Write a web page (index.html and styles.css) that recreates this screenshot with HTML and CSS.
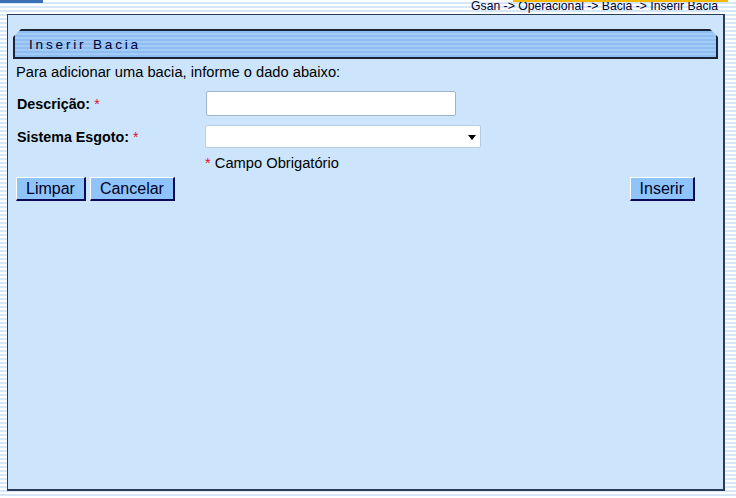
FILE: index.html
```html
<!DOCTYPE html>
<html lang="pt">
<head>
    <meta charset="UTF-8">
    <title>Inserir Bacia</title>
    <link rel="stylesheet" href="styles.css">
</head>
<body>
    <div class="topo">
        <div class="marca"></div>
        <div class="caminho">Gsan -&gt; Operacional -&gt; Bacia -&gt; Inserir Bacia</div>
    </div>

    <div class="painel">
        <div class="titulo">Inserir Bacia</div>
        <p class="instrucao">Para adicionar uma bacia, informe o dado abaixo:</p>

        <div class="form">
            <label class="rotulo">Descrição:<span class="obrig">*</span></label>
            <input type="text" class="campo">

            <label class="rotulo">Sistema Esgoto:<span class="obrig">*</span></label>
            <div class="select">
                <span class="seta"></span>
            </div>

            <span></span>
            <div class="aviso"><span class="obrig">*</span> Campo Obrigatório</div>
        </div>

        <div class="botoes">
            <button class="botao">Limpar</button>
            <button class="botao">Cancelar</button>
            <button class="botao inserir">Inserir</button>
        </div>
    </div>
</body>
</html>
```

FILE: styles.css
```css
*{
    margin: 0;
    padding: 0;
    box-sizing: border-box;
}
body{
    width: 736px;
    height: 498px;
    overflow: hidden;
    font-family: "Liberation Sans", Arial, sans-serif;
    font-size: 14.7px;
    color: #000;
    background: repeating-linear-gradient(to bottom, #ffffff 0px, #ffffff 2px, #d6e8f8 2px, #d6e8f8 4px);
}
.topo{
    display: flex;
    justify-content: space-between;
    height: 14px;
}
.marca{
    width: 43px;
    height: 3px;
    background-color: #3b6fb6;
}
.caminho{
    position: relative;
    padding-right: 18px;
    padding-top: 1px;
    font-size: 12.2px;
    line-height: 11px;
    height: 12px;
    color: #000033;
}
.caminho::before{
    content: "";
    position: absolute;
    left: 42px;
    right: 8px;
    top: 0;
    height: 2px;
    background-color: #f8b800;
}
.painel{
    margin-left: 7px;
    width: 718px;
    height: 477px;
    border: 1px solid #2c3e57;
    border-width: 1px 2px 2px 1px;
    background-color: #cce5fd;
    padding: 14px 5px 0 5px;
}
.titulo{
    height: 30px;
    border: 2px solid #1a2436;
    clip-path: polygon(8px 0, calc(100% - 8px) 0, 100% 8px, 100% 100%, 0 100%, 0 8px);
    background: repeating-linear-gradient(to bottom, #8dbdf1 0px, #8dbdf1 2px, #a4cbf5 2px, #a4cbf5 4px);
    padding-left: 14px;
    line-height: 27px;
    letter-spacing: 2.8px;
    color: #000033;
    font-size: 13.6px;
}
.instrucao{
    margin: 5px 0 0 3px;
    line-height: 17px;
}
.form{
    display: grid;
    grid-template-columns: 192px 1fr;
    row-gap: 9px;
    margin-top: 10px;
    align-items: center;
}
.rotulo{
    padding-left: 4px;
    font-weight: bold;
    font-size: 14.3px;
}
.obrig{
    color: #e0102a;
    margin-left: 4px;
    font-weight: normal;
}
.aviso .obrig{
    margin-left: 0;
}
.campo{
    width: 250px;
    height: 25px;
    border: 1px solid #9fb4cc;
    border-radius: 2px;
    background-color: #fff;
    margin-left: 1px;
    font: inherit;
}
.select{
    width: 276px;
    height: 23px;
    border: 1px solid #b9cde2;
    border-radius: 2px;
    background-color: #fff;
    position: relative;
}
.seta{
    position: absolute;
    right: 4px;
    top: 9px;
    border-left: 4px solid transparent;
    border-right: 4px solid transparent;
    border-top: 5px solid #000;
}
.aviso{
    margin-top: -2px;
    line-height: 16px;
}
.botoes{
    display: flex;
    gap: 4px;
    margin: 6px 0 0 3px;
    padding-right: 23px;
}
.botao{
    height: 24px;
    padding: 0 9px;
    font-family: "Liberation Sans", Arial, sans-serif;
    font-size: 16px;
    color: #000022;
    background-color: #8fc4fb;
    border: 1px solid;
    border-color: #ffffff #0b0b5a #0b0b5a #ffffff;
    border-width: 1px 2px 2px 1px;
}
.inserir{
    margin-left: auto;
}
```
